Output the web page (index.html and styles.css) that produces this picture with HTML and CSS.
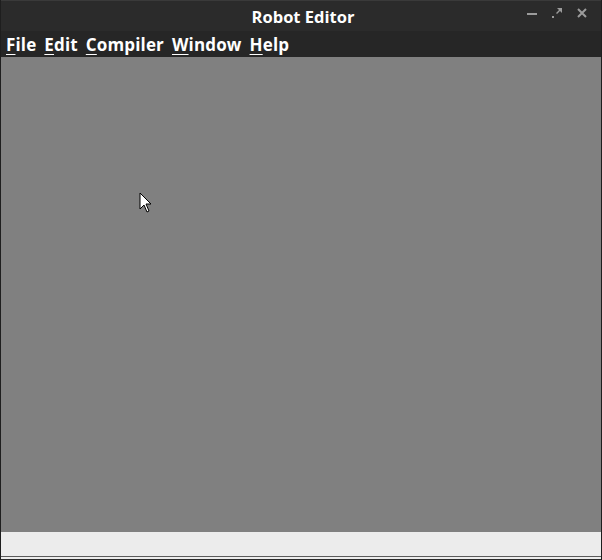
FILE: index.html
```html
<!DOCTYPE html>
<html>
<head>
<meta charset="utf-8">
<link rel="stylesheet" href="styles.css">
</head>
<body>
<div class="window">
  <header class="titlebar">
    <span class="title">Robot Editor</span>
    <div class="controls">
      <svg class="ctl" width="14" height="14" viewBox="0 0 14 14"><rect x="2" y="7" width="10" height="2" fill="#9b9b9b"/></svg>
      <svg class="ctl" width="14" height="14" viewBox="0 0 14 14"><path d="M7 2h5v5l-2-2-3 3-1-1 3-3z" fill="#9b9b9b"/><rect x="2" y="10" width="2" height="2" fill="#9b9b9b"/></svg>
      <svg class="ctl" width="14" height="14" viewBox="0 0 14 14"><path d="M3 3l8 8M11 3l-8 8" stroke="#9b9b9b" stroke-width="2"/></svg>
    </div>
  </header>
  <nav class="menubar">
    <span class="menu"><u>F</u>ile</span>
    <span class="menu"><u>E</u>dit</span>
    <span class="menu"><u>C</u>ompiler</span>
    <span class="menu"><u>W</u>indow</span>
    <span class="menu"><u>H</u>elp</span>
  </nav>
  <main class="canvas">
    <svg class="cursor" width="14" height="22" viewBox="0 0 14 22"><path d="M1 1v16l4-4 3 7 2-1-3-7h5z" fill="#fff" stroke="#000" stroke-width="1"/></svg>
  </main>
  <footer class="status"></footer>
</div>
</body>
</html>
```
FILE: styles.css
```css
html, body { margin: 0; padding: 0; }
body { width: 602px; height: 560px; overflow: hidden; background: #2b2b2b; font-family: "Open Sans", "DejaVu Sans", sans-serif; }
.window { display: flex; flex-direction: column; height: 560px; background: #2a2a2a; border-left: 1px solid #1e1e1e; border-right: 1px solid #1e1e1e; box-sizing: border-box; }
.titlebar { height: 31px; display: flex; align-items: center; justify-content: center; position: relative; background: #2b2b2b; border-top: 1px solid #3a3a3a; box-sizing: border-box; }
.title { color: #fff; font-weight: 700; font-size: 16.5px; margin-left: 4px; }
.controls { position: absolute; right: 12px; top: 5px; display: flex; gap: 11px; }
.menubar { height: 26px; display: flex; align-items: center; gap: 8px; padding-left: 5px; background: #262626; }
.menu { color: #fff; font-weight: 700; font-size: 17px; letter-spacing: 0.15px; line-height: 20px; padding-top: 2px; }
.menu u { text-decoration-thickness: 1px; text-underline-offset: 3px; }
.canvas { flex: 1; background: #808080; position: relative; }
.cursor { position: absolute; left: 138px; top: 135px; }
.status { height: 24px; background: #ececec; border-bottom: 1px solid #5a5a5a; margin-bottom: 3px; box-shadow: 0 2px 0 #ececec; }
```
